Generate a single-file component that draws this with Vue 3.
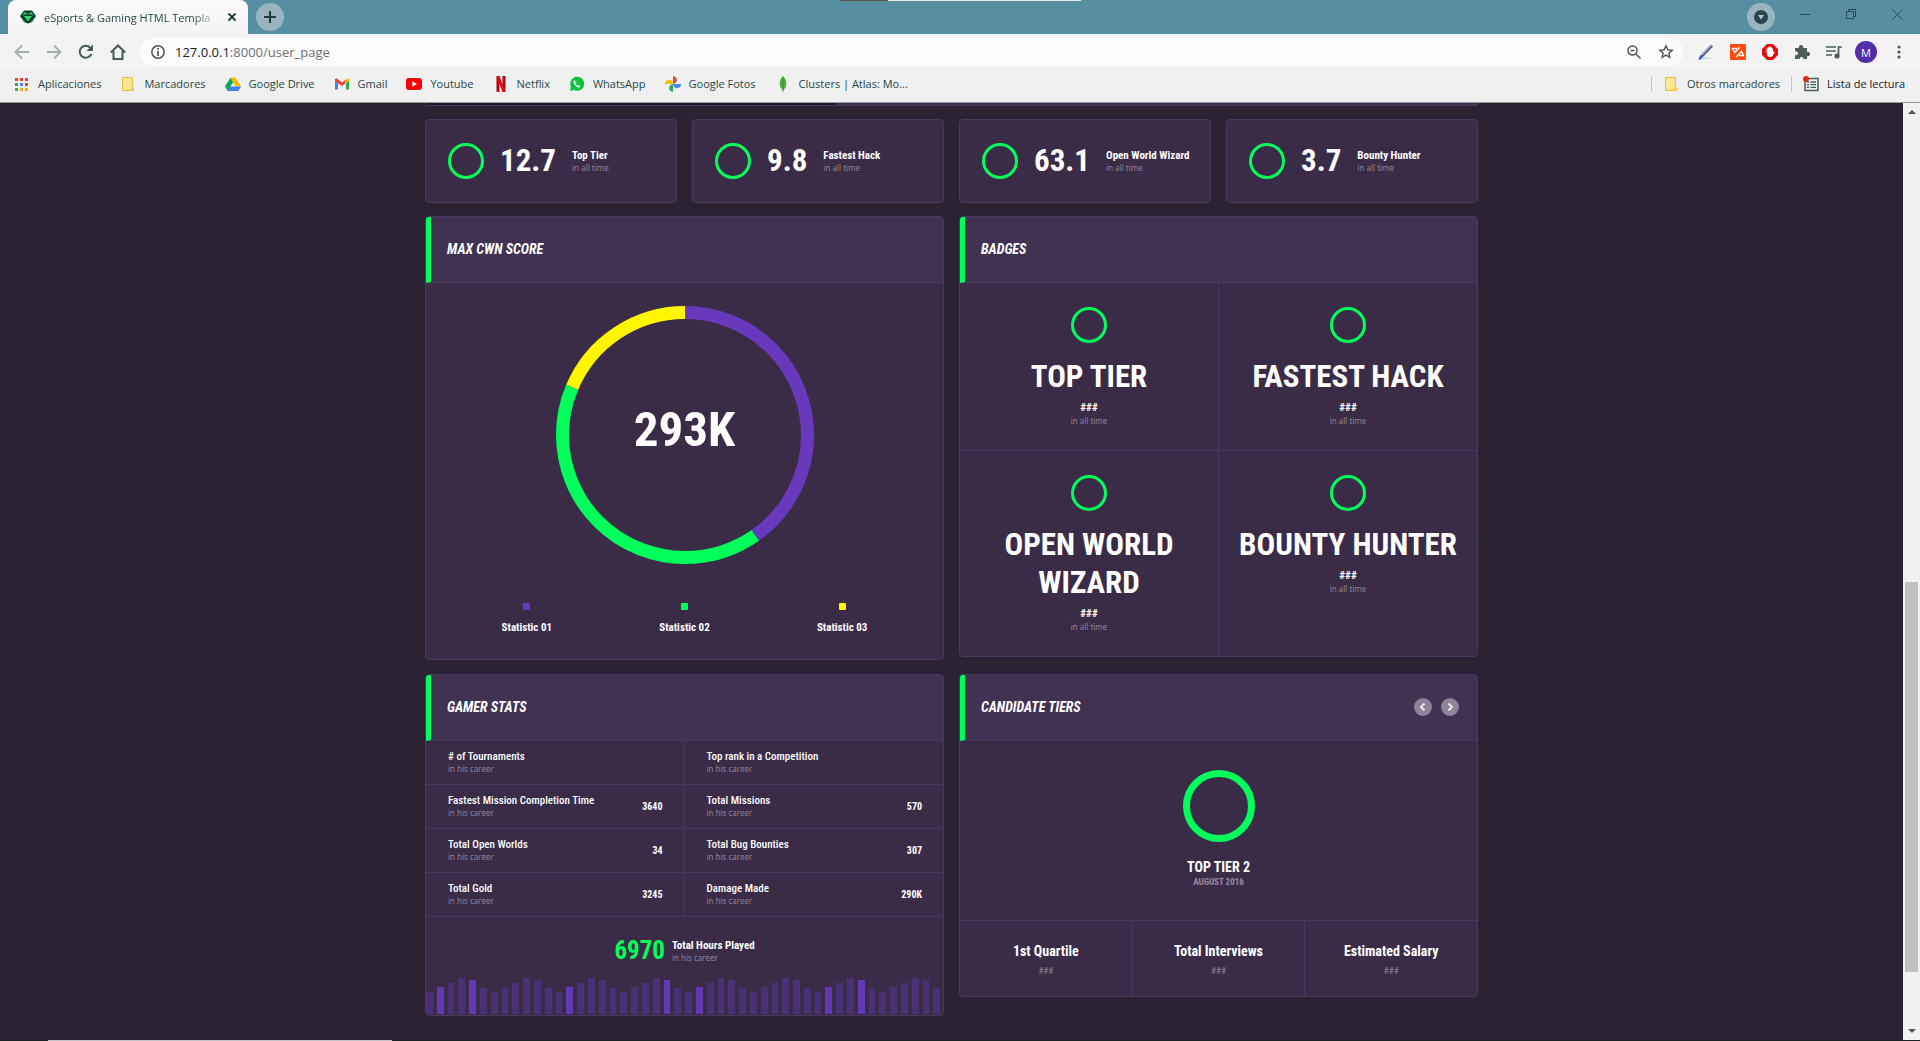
<script setup>
const bookmarks = [
  { id: 'apps', label: 'Aplicaciones' },
  { id: 'folder', label: 'Marcadores' },
  { id: 'drive', label: 'Google Drive' },
  { id: 'gmail', label: 'Gmail' },
  { id: 'youtube', label: 'Youtube' },
  { id: 'netflix', label: 'Netflix' },
  { id: 'whatsapp', label: 'WhatsApp' },
  { id: 'photos', label: 'Google Fotos' },
  { id: 'mongo', label: 'Clusters | Atlas: Mo...' },
]

const summary = [
  { value: '12.7', name: 'Top Tier' },
  { value: '9.8', name: 'Fastest Hack' },
  { value: '63.1', name: 'Open World Wizard' },
  { value: '3.7', name: 'Bounty Hunter' },
]

const badges = ['Top Tier', 'Fastest Hack', 'Open World Wizard', 'Bounty Hunter']

const legend = [
  { name: 'Statistic 01', tone: 'purple' },
  { name: 'Statistic 02', tone: 'green' },
  { name: 'Statistic 03', tone: 'yellow' },
]

const statRows = [
  [{ name: '# of Tournaments', value: '' }, { name: 'Top rank in a Competition', value: '' }],
  [{ name: 'Fastest Mission Completion Time', value: '3640' }, { name: 'Total Missions', value: '570' }],
  [{ name: 'Total Open Worlds', value: '34' }, { name: 'Total Bug Bounties', value: '307' }],
  [{ name: 'Total Gold', value: '3245' }, { name: 'Damage Made', value: '290K' }],
]

const tiers = ['1st Quartile', 'Total Interviews', 'Estimated Salary']

const wave = [22, 27, 31, 36, 34, 26]
const highlighted = [1, 4, 13, 22, 25, 37, 40]
const bars = Array.from({ length: 48 }, (_, i) => ({
  height: wave[i % wave.length],
  active: highlighted.includes(i),
}))
</script>

<template>
  <div class="window">
    <header class="chrome">
      <div class="tabstrip">
        <div class="tab">
          <svg class="favicon" width="16" height="16" viewBox="0 0 16 16">
            <path d="M4 1.500h8l4 5.500-4 6-4 1.500L4 13 0 7z" fill="#0d3a22" />
            <path d="M4.500 2.500 8 5 2 6.500z M11.500 2.500 14 6.500 8 5z" fill="#1fae58" />
            <path d="M4 7h8l-4 5.500z" fill="#2bdc70" />
            <path d="M1.500 8l4.500 5-2-.5z M14.500 8 10 13l2-.5z" fill="#1b9c4d" />
            <path d="M5.500 6h5L8 3.500z" fill="#157c3f" />
          </svg>
          <span class="tab-title">eSports &amp; Gaming HTML Templa</span>
          <button class="icon-btn tab-close" aria-label="Cerrar">
            <svg width="10" height="10" viewBox="0 0 10 10"><path d="M1.500 1.500l7 7M8.500 1.500l-7 7" stroke="#1f3a40" stroke-width="1.800" /></svg>
          </button>
        </div>
        <button class="icon-btn new-tab" aria-label="Nueva pestaña">
          <svg width="12" height="12" viewBox="0 0 12 12"><path d="M6 0v12M0 6h12" stroke="#223b42" stroke-width="2" /></svg>
        </button>
        <div class="window-controls">
          <button class="icon-btn tab-search" aria-label="Buscar pestañas">
            <svg width="14" height="14" viewBox="0 0 14 14"><circle cx="7" cy="7" r="7" fill="#2a444b" /><path d="M4 5h6l-3 4.500z" fill="#b5c9d0" /></svg>
          </button>
          <button class="icon-btn win-btn" aria-label="Minimizar">
            <svg width="10" height="10" viewBox="0 0 10 10"><path d="M0 5.500h10" stroke="#2c4a53" /></svg>
          </button>
          <button class="icon-btn win-btn" aria-label="Restaurar">
            <svg width="10" height="10" viewBox="0 0 10 10" fill="none" stroke="#2c4a53"><path d="M.5 2.500h7v7h-7z M2.500 2.500v-2h7v7h-2" /></svg>
          </button>
          <button class="icon-btn win-btn" aria-label="Cerrar ventana">
            <svg width="11" height="11" viewBox="0 0 11 11"><path d="M.5.5l10 10M10.500.5l-10 10" stroke="#2c4a53" /></svg>
          </button>
        </div>
        <div class="edge-light"></div>
      </div>

      <div class="toolbar">
        <nav class="nav-buttons">
          <button class="icon-btn" aria-label="Atrás">
            <svg width="16" height="16" viewBox="0 0 16 16" fill="none" stroke="#a4aeb0" stroke-width="1.800"><path d="M15 8H2M8 1.500 1.500 8 8 14.500" /></svg>
          </button>
          <button class="icon-btn" aria-label="Adelante">
            <svg width="16" height="16" viewBox="0 0 16 16" fill="none" stroke="#a4aeb0" stroke-width="1.800"><path d="M1 8h13M8 1.500 14.500 8 8 14.500" /></svg>
          </button>
          <button class="icon-btn" aria-label="Recargar">
            <svg width="16" height="16" viewBox="0 0 16 16"><path d="M13.300 10A6 6 0 1 1 12.300 3.800" fill="none" stroke="#465c58" stroke-width="2" /><path d="M15 .5V7H8.500z" fill="#465c58" /></svg>
          </button>
          <button class="icon-btn" aria-label="Inicio">
            <svg width="16" height="16" viewBox="0 0 16 16" fill="none" stroke="#465c58" stroke-width="2"><path d="M.800 8.500 8 1.500l7.200 7M3.500 7v8h9V7" /></svg>
          </button>
        </nav>
        <div class="address">
          <svg width="14" height="14" viewBox="0 0 14 14"><circle cx="7" cy="7" r="6.200" fill="none" stroke="#50575b" stroke-width="1.500" /><path d="M7 3v1.800M7 6v5" stroke="#50575b" stroke-width="1.700" /></svg>
          <div class="url"><span class="host">127.0.0.1</span>:8000/user_page</div>
          <button class="icon-btn" aria-label="Zoom">
            <svg width="14" height="14" viewBox="0 0 14 14" fill="none" stroke="#50575b" stroke-width="1.500"><circle cx="5.500" cy="5.500" r="4.500" /><path d="M9 9l4.500 4.500M3.500 5.500h4" /></svg>
          </button>
          <button class="icon-btn" aria-label="Añadir a marcadores">
            <svg width="16" height="16" viewBox="0 0 16 16" fill="none" stroke="#50575b" stroke-width="1.400"><path d="M8 1.800l1.800 4 4.400.4-3.300 2.900 1 4.300L8 11.100l-3.900 2.300 1-4.300L1.800 6.200l4.400-.4z" /></svg>
          </button>
        </div>
        <div class="extensions">
          <svg width="16" height="16" viewBox="0 0 16 16"><path d="M1 15c4-3 8-2 13 0z" fill="#c9dbfa" /><path d="M2 14 14 1.500" stroke="#4a5c8c" stroke-width="2.800" /><path d="M4 11 13.500 1" stroke="#c6cde2" /><path d="M1 15.500 3.500 13" stroke="#2c6ee8" stroke-width="2" /></svg>
          <svg width="16" height="16" viewBox="0 0 16 16"><rect width="16" height="16" rx="1" fill="#ff4a0c" /><path d="M7 4.500H2.500L4.500 8.500 9.500 3.500M9 11.500h4.500L11.500 7.500 6 13" fill="none" stroke="#fff" stroke-width="1.400" /></svg>
          <svg width="16" height="16" viewBox="0 0 16 16"><path d="M5 0h6l5 5v6l-5 5H5l-5-5V5z" fill="#e30f10" /><path d="M4.500 8V4.500h1.200V3.200H7v-.700h1.400v.700h1.400v1.300H11V8l1-.800.6.8-2 4-1.600 1H7l-1.500-1z" fill="#fff" /></svg>
          <svg width="16" height="16" viewBox="0 0 16 16"><path d="M1 4h4a2.200 2.200 0 1 1 4 0h4v4a2.200 2.200 0 1 1 0 4v3H9.500a2 2 0 1 0-4 0H1v-4a2 2 0 1 0 0-3.500z" fill="#4b605b" /></svg>
          <svg width="16" height="16" viewBox="0 0 16 16" fill="none" stroke="#4b605b" stroke-width="1.700"><path d="M0 3h10M0 7h10M0 11h6M12.500 12V3H16" /><circle cx="11" cy="12" r="1.700" fill="#4b605b" /></svg>
        </div>
        <button class="icon-btn avatar" aria-label="Perfil">M</button>
        <button class="icon-btn menu" aria-label="Menú">
          <svg width="4" height="14" viewBox="0 0 4 14" fill="#465c58"><circle cx="2" cy="2" r="1.600" /><circle cx="2" cy="7" r="1.600" /><circle cx="2" cy="12" r="1.600" /></svg>
        </button>
      </div>

      <nav class="bookmarks">
        <a v-for="b in bookmarks" :key="b.id" href="#" class="bookmark">
          <svg v-if="b.id === 'apps'" width="16" height="16" viewBox="0 0 16 16">
            <path d="M1 2h3v3H1zM6 2h3v3H6zM11 2h3v3h-3z" fill="#ea4335" />
            <path d="M1 7h3v3H1z" fill="#34a853" /><path d="M6 7h3v3H6z" fill="#4285f4" /><path d="M11 7h3v3h-3z" fill="#ea4335" />
            <path d="M1 12h3v3H1z" fill="#34a853" /><path d="M6 12h3v3H6zM11 12h3v3h-3z" fill="#fbab05" />
          </svg>
          <svg v-else-if="b.id === 'folder'" width="16" height="16" viewBox="0 0 16 16"><path d="M2.500 1.500h10v9l1 1v3h-11z" fill="#ffe694" stroke="#e8c13c" /><path d="M11.500 14v-3" stroke="#e8c13c" /></svg>
          <svg v-else-if="b.id === 'drive'" width="16" height="16" viewBox="0 0 16 16"><path d="M5.500 1.500 0 10.500 2.700 15 8.200 6z" fill="#0da960" /><path d="M5.500 1.500h5L16 10.500h-5.200z" fill="#ffba00" /><path d="M5.300 10.500H16L13.300 15H2.700z" fill="#3b82f6" /></svg>
          <svg v-else-if="b.id === 'gmail'" width="16" height="16" viewBox="0 0 16 16"><path d="M1 3.500v10h3V7z" fill="#4285f4" /><path d="M15 3.500v10h-3V7z" fill="#34a853" /><path d="M1 5V3l2-.5 5 4 3.500-2.800V7L8 10 1 5z" fill="#ea4335" /><path d="M11.500 3.500 15 2.500V5l-3.500 2.500z" fill="#fbbc04" /></svg>
          <svg v-else-if="b.id === 'youtube'" width="16" height="16" viewBox="0 0 16 16"><rect y="2" width="16" height="12" rx="3" fill="#f00" /><path d="M6.300 5.300 11 8l-4.700 2.700z" fill="#fff" /></svg>
          <svg v-else-if="b.id === 'netflix'" width="16" height="16" viewBox="0 0 16 16"><path d="M3.500 0h3v16l-3-.3zM9.500 0h3v15.700l-3 .3z" fill="#b1060f" /><path d="M3.500 0h3l6 16h-3z" fill="#e50914" /></svg>
          <svg v-else-if="b.id === 'whatsapp'" width="16" height="16" viewBox="0 0 16 16"><path d="M1 15l1-4a7 7 0 1 1 3 3z" fill="#0fc143" /><path d="M5.500 4.500c-1.500 1.500 0 4 1.500 5.300s3 2 4 .7l-1.800-1.300-.9.7C7.500 9.500 6.500 8.500 6.200 7.600l.7-.8z" fill="#fff" stroke="#fff" stroke-width=".6" /></svg>
          <svg v-else-if="b.id === 'photos'" width="16" height="16" viewBox="0 0 16 16"><path d="M8 8V0a4 4 0 0 1 2.500 7z" fill="#ea4335" /><path d="M8 8h8a4 4 0 0 1-7 2.800z" fill="#4285f4" /><path d="M8 8v8a4 4 0 0 1-2.500-7z" fill="#34a853" /><path d="M8 8H0a4 4 0 0 1 7-2.800z" fill="#fbbc04" /></svg>
          <svg v-else width="16" height="16" viewBox="0 0 16 16"><path d="M8 0c5 5 4 11 0 14.500C4 11 3 5 8 0z" fill="#4faa41" /><path d="M8 2v14" stroke="#3c8435" stroke-width=".8" /></svg>
          <span>{{ b.label }}</span>
        </a>
        <div class="bookmarks-end">
          <a href="#" class="bookmark divided">
            <svg width="16" height="16" viewBox="0 0 16 16"><path d="M2.500 1.500h10v9l1 1v3h-11z" fill="#ffe694" stroke="#e8c13c" /><path d="M11.500 14v-3" stroke="#e8c13c" /></svg>
            <span>Otros marcadores</span>
          </a>
          <a href="#" class="bookmark divided reading">
            <svg width="16" height="16" viewBox="0 0 16 16"><rect x="2" y="2.500" width="13" height="12" fill="none" stroke="#465c58" stroke-width="1.500" /><path d="M4 6h2M7.500 6H13M4 8.700h2M7.500 8.700H13M4 11.400h2M7.500 11.400H13" stroke="#465c58" stroke-width="1.300" /><circle cx="3" cy="3" r="3" fill="#e0281f" /></svg>
            <span>Lista de lectura</span>
          </a>
        </div>
      </nav>
    </header>

    <div class="viewport">
      <main class="page">
        <div class="container">
          <div class="progress"><div class="progress-fill"></div></div>

          <section class="summary">
            <article v-for="s in summary" :key="s.name" class="card summary-card">
              <span class="ring"></span>
              <strong class="figure">{{ s.value }}</strong>
              <div>
                <h6 class="label">{{ s.name }}</h6>
                <p class="note">in all time</p>
              </div>
            </article>
          </section>

          <div class="columns">
            <div class="column">
              <section class="card">
                <header class="card-header"><h4>Max CWN Score</h4></header>
                <div class="donut-body">
                  <div class="donut">
                    <svg viewBox="0 0 258 258" fill="none" stroke-width="13">
                      <g transform="rotate(-90 129 129)">
                        <circle cx="129" cy="129" r="122.500" pathLength="360" stroke="#6839bd" stroke-dasharray="145 215" />
                        <circle cx="129" cy="129" r="122.500" pathLength="360" stroke="#00ff5b" stroke-dasharray="148 212" stroke-dashoffset="-145" />
                        <circle cx="129" cy="129" r="122.500" pathLength="360" stroke="#fff600" stroke-dasharray="67 293" stroke-dashoffset="-293" />
                      </g>
                    </svg>
                    <strong class="donut-value">293K</strong>
                  </div>
                  <ul class="legend">
                    <li v-for="l in legend" :key="l.name"><i :class="['dot', l.tone]"></i><span class="label">{{ l.name }}</span></li>
                  </ul>
                </div>
              </section>

              <section class="card">
                <header class="card-header"><h4>Gamer Stats</h4></header>
                <table class="stats">
                  <tbody>
                    <tr v-for="(row, r) in statRows" :key="r">
                      <template v-for="cell in row" :key="cell.name">
                        <th scope="row">{{ cell.name }}<span class="note">in his career</span></th>
                        <td>{{ cell.value }}</td>
                      </template>
                    </tr>
                  </tbody>
                </table>
                <div class="hours">
                  <strong class="hours-value">6970</strong>
                  <div>
                    <h6 class="label">Total Hours Played</h6>
                    <p class="note">in his career</p>
                  </div>
                </div>
                <div class="bars">
                  <span v-for="(bar, i) in bars" :key="i" :class="{ active: bar.active }" :style="{ height: bar.height + 'px' }"></span>
                </div>
              </section>
            </div>

            <div class="column">
              <section class="card badges-card">
                <header class="card-header"><h4>Badges</h4></header>
                <div class="badges">
                  <article v-for="b in badges" :key="b" class="badge">
                    <span class="ring"></span>
                    <h3 class="figure">{{ b }}</h3>
                    <h6 class="label">###</h6>
                    <p class="note">in all time</p>
                  </article>
                </div>
              </section>

              <section class="card">
                <header class="card-header">
                  <h4>Candidate Tiers</h4>
                  <div class="pager">
                    <button aria-label="Anterior"><svg width="10" height="10" viewBox="0 0 10 10"><path d="M6.500 1.500 3 5l3.500 3.500" fill="none" stroke="#ece8f0" stroke-width="2" /></svg></button>
                    <button aria-label="Siguiente"><svg width="10" height="10" viewBox="0 0 10 10"><path d="M3.500 1.500 7 5 3.500 8.500" fill="none" stroke="#ece8f0" stroke-width="2" /></svg></button>
                  </div>
                </header>
                <div class="tier">
                  <span class="ring large"></span>
                  <h5>Top Tier 2</h5>
                  <time>August 2016</time>
                </div>
                <div class="tier-cells">
                  <div v-for="t in tiers" :key="t"><h5>{{ t }}</h5><p>###</p></div>
                </div>
              </section>
            </div>
          </div>
        </div>
      </main>
      <div class="scrollbar">
        <i class="arrow up"></i>
        <div class="track"><div class="thumb"></div></div>
        <i class="arrow down"></i>
      </div>
    </div>
    <footer class="taskbar-edge"><div></div></footer>
  </div>
</template>

<style>
body {
  background: #2b2234;
}
</style>

<style scoped>
* {
  box-sizing: border-box;
}
h3, h4, h5, h6, p, ul {
  margin: 0;
  padding: 0;
}
button {
  font: inherit;
  padding: 0;
  border: 0;
  cursor: pointer;
}
svg {
  display: block;
  flex: none;
}
.window {
  min-height: 100vh;
  display: flex;
  flex-direction: column;
  font-family: "Roboto Condensed", "Liberation Sans Narrow", Roboto, sans-serif;
}

/* Browser frame */
.chrome {
  font-family: "Open Sans", "Noto Sans", sans-serif;
  font-size: 11px;
  color: #1f4746;
  background: #f0f0f0;
  border-bottom: 1px solid #9a979d;
}
.icon-btn {
  display: flex;
  align-items: center;
  justify-content: center;
  background: none;
}
.tabstrip {
  position: relative;
  display: flex;
  align-items: center;
  height: 34px;
  padding-left: 8px;
  background: #568fa1;
}
.tab {
  display: flex;
  align-items: center;
  gap: 8px;
  width: 240px;
  height: 34px;
  padding: 0 11px 0 12px;
  border-radius: 8px 8px 0 0;
  background: linear-gradient(#fbfbfb, #f3f3f3);
}
.tab-title {
  flex: 1;
  white-space: nowrap;
  mask-image: linear-gradient(to right, #000 85%, transparent);
}
.new-tab {
  width: 28px;
  height: 28px;
  margin-left: 8px;
  border-radius: 50%;
  background: #98b5bf;
}
.window-controls {
  display: flex;
  align-items: center;
  margin-left: auto;
}
.tab-search {
  width: 28px;
  height: 28px;
  margin-right: 7px;
  border-radius: 50%;
  background: #98b5bf;
}
.win-btn {
  width: 46px;
  height: 28px;
  padding-bottom: 6px;
}
.edge-light {
  position: absolute;
  top: 0;
  left: 840px;
  width: 241px;
  height: 1px;
  background: linear-gradient(to right, #555548 48px, #e6e8e6 48px);
}
.toolbar {
  display: flex;
  align-items: center;
  height: 34px;
  padding: 2px 19px 0 14px;
  background: #f3f3f3;
}
.nav-buttons {
  display: flex;
  gap: 16px;
}
.address {
  flex: 1;
  display: flex;
  align-items: center;
  gap: 17px;
  height: 28px;
  margin: 0 15px 0 14px;
  padding: 0 9px 0 11px;
  border-radius: 14px;
  background: #fcfcfc;
}
.url {
  flex: 1;
  margin-left: -7px;
  font-size: 13px;
  color: #6b6f73;
}
.host {
  color: #202124;
}
.extensions {
  display: flex;
  gap: 16px;
}
.avatar {
  width: 22px;
  height: 22px;
  margin-left: 13px;
  border-radius: 50%;
  background: #512da8;
  color: #fff;
}
.menu {
  margin-left: 20px;
}
.bookmarks {
  display: flex;
  align-items: center;
  gap: 19px;
  height: 34px;
  padding: 0 15px 3px 14px;
}
.bookmark {
  display: flex;
  align-items: center;
  gap: 8px;
  color: inherit;
  text-decoration: none;
  white-space: nowrap;
}
.bookmarks-end {
  display: flex;
  gap: 11px;
  margin-left: auto;
}
.divided {
  padding-left: 11px;
  border-left: 1px solid #c3c6c7;
}
.reading {
  color: #16202a;
}

/* Page */
.viewport {
  flex: 1;
  display: flex;
}
.page {
  flex: 1;
  background: #2b2234;
}
.container {
  width: 1053px;
  max-width: 100%;
  margin: 0 auto;
  color: #fff;
}
.progress {
  height: 3px;
  border: 1px solid #4a3a63;
  border-top: 0;
  border-radius: 0 0 4px 4px;
  background: #413251;
}
.progress-fill {
  width: 39%;
  height: 2px;
  background: #21172b;
}
.summary {
  display: grid;
  grid-template-columns: repeat(4, 1fr);
  gap: 15px;
  margin: 13px 0;
}
.card {
  border: 1px solid #483961;
  border-radius: 4px;
  background: #3a2c47;
  overflow: hidden;
}
.summary-card {
  display: flex;
  align-items: center;
  gap: 16px;
  height: 84px;
  padding: 0 22px;
}
.ring {
  display: block;
  flex: none;
  width: 36px;
  height: 36px;
  border: 3px solid #00ff5b;
  border-radius: 50%;
}
.ring.large {
  width: 72px;
  height: 72px;
  border-width: 7px;
}
.figure {
  font-size: 31px;
  line-height: 38px;
  font-weight: 700;
}
.label {
  font-size: 11px;
  line-height: 13px;
  font-weight: 700;
  white-space: nowrap;
}
.note {
  display: block;
  font-family: "Noto Sans", "Open Sans", sans-serif;
  font-size: 8px;
  line-height: 12px;
  font-weight: 400;
  color: #8d8496;
}
.columns {
  display: grid;
  grid-template-columns: 1fr 1fr;
  gap: 15px;
}
.column {
  display: flex;
  flex-direction: column;
  gap: 14px;
}
.card-header {
  display: flex;
  align-items: center;
  justify-content: space-between;
  height: 66px;
  padding: 0 18px 2px 16px;
  border-left: 5px solid #00ff5b;
  border-bottom: 1px solid #483961;
  background: #413251;
}
.card-header h4 {
  font-size: 14px;
  line-height: 16px;
  font-style: italic;
  text-transform: uppercase;
}
.donut-body {
  display: flex;
  flex-direction: column;
  align-items: center;
  padding: 23px 22px 25px;
}
.donut {
  display: grid;
  place-items: center;
  width: 258px;
}
.donut > * {
  grid-area: 1 / 1;
}
.donut svg {
  width: 100%;
}
.donut-value {
  padding-bottom: 10px;
  font-size: 49px;
  line-height: 60px;
}
.legend {
  display: flex;
  width: 100%;
  margin-top: 39px;
  list-style: none;
}
.legend li {
  flex: 1;
  display: flex;
  flex-direction: column;
  align-items: center;
  gap: 11px;
}
.dot {
  width: 7px;
  height: 7px;
  border-radius: 1px;
}
.purple {
  background: #6839bd;
}
.green {
  background: #00ff5b;
}
.yellow {
  background: #fff600;
}
.badges-card {
  margin-bottom: 3px;
}
.badges {
  display: grid;
  grid-template-columns: 1fr 1fr;
  gap: 1px;
  background: #483961;
}
.badge {
  display: flex;
  flex-direction: column;
  align-items: center;
  padding: 24px 16px 22px;
  text-align: center;
  background: #3a2c47;
}
.badge .figure {
  margin: 15px 0 5px;
  text-transform: uppercase;
}
.badge .note {
  line-height: 14px;
}
.stats {
  width: 100%;
  border-collapse: separate;
  border-spacing: 0;
  table-layout: fixed;
}
.stats tr {
  height: 44px;
}
.stats th,
.stats td {
  height: 44px;
  padding: 0 0 0 22px;
  border-bottom: 1px solid #483961;
  font-weight: 500;
  font-size: 11px;
  line-height: 12px;
  text-align: left;
}
.stats th {
  width: 36%;
}
.stats td {
  width: 14%;
  padding: 0 21px 0 0;
  font-size: 10px;
  font-weight: 700;
  text-align: right;
}
.stats td:nth-child(2) {
  border-right: 1px solid #483961;
}
.hours {
  display: flex;
  justify-content: center;
  align-items: center;
  gap: 7px;
  height: 61px;
  padding-top: 7px;
}
.hours-value {
  font-size: 25px;
  line-height: 30px;
  color: #00ff5b;
}
.bars {
  display: flex;
  align-items: flex-end;
  gap: 4px;
  height: 37px;
  padding: 0 3px 1px 0;
}
.bars span {
  flex: 1;
  background: #4a3074;
}
.bars .active {
  background: #6437b4;
}
.pager {
  display: flex;
  gap: 9px;
}
.pager button {
  display: flex;
  align-items: center;
  justify-content: center;
  width: 18px;
  height: 18px;
  border-radius: 50%;
  background: #8d8497;
}
.tier {
  display: flex;
  flex-direction: column;
  align-items: center;
  height: 180px;
  padding-top: 29px;
  border-bottom: 1px solid #483961;
  text-transform: uppercase;
}
h5 {
  font-size: 14px;
  line-height: 16px;
}
.tier h5 {
  margin-top: 17px;
}
.tier time {
  font-size: 9px;
  line-height: 14px;
  font-weight: 700;
  color: #958c9e;
}
.tier-cells {
  display: grid;
  grid-template-columns: repeat(3, 1fr);
  gap: 1px;
  background: #483961;
}
.tier-cells div {
  height: 75px;
  padding-top: 22px;
  text-align: center;
  background: #3a2c47;
}
.tier-cells p {
  margin-top: 6px;
  font-size: 9px;
  line-height: 12px;
  color: #8d8496;
}
.scrollbar {
  display: flex;
  flex-direction: column;
  align-items: center;
  width: 17px;
  padding: 7px 0;
  background: #f1f1f1;
}
.track {
  flex: 1;
  display: flex;
  flex-direction: column;
  justify-content: flex-end;
  padding-bottom: 57px;
}
.thumb {
  width: 13px;
  height: 390px;
  background: #c1c1c1;
}
.arrow {
  border: 4px solid transparent;
}
.up {
  border-top: 0;
  border-bottom-color: #505050;
}
.down {
  border-bottom: 0;
  border-top-color: #505050;
}
.taskbar-edge {
  height: 1px;
  padding-left: 48px;
  background: #1b2024;
}
.taskbar-edge div {
  width: 344px;
  height: 1px;
  background: #c4c2c8;
}
</style>
